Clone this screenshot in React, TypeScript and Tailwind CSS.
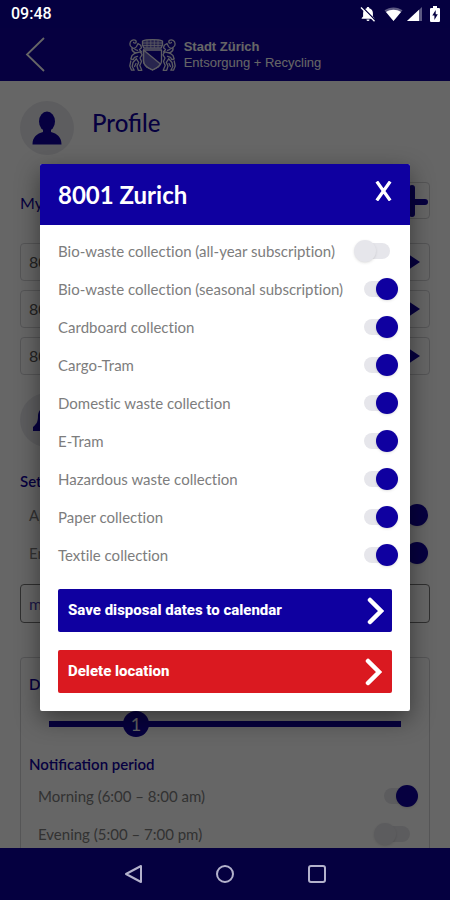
import React, { useState } from "react";

const collections = [
    { label: "Bio-waste collection (all-year subscription)", on: false },
    { label: "Bio-waste collection (seasonal subscription)", on: true },
    { label: "Cardboard collection", on: true },
    { label: "Cargo-Tram", on: true },
    { label: "Domestic waste collection", on: true },
    { label: "E-Tram", on: true },
    { label: "Hazardous waste collection", on: true },
    { label: "Paper collection", on: true },
    { label: "Textile collection", on: true },
];

export default function App() {
    return (
        <div className="relative h-screen overflow-hidden flex flex-col bg-white font-['Lato',sans-serif]">
            <StatusBar />
            <Header />
            <ProfilePage />
            <NavBar />
            <LocationDialog />
        </div>
    );
}

function StatusBar() {
    return (
        <div className="relative z-20 h-7 shrink-0 flex items-center justify-between pl-[11px] pr-[10px] bg-[#050040] text-white">
            <span className="font-['Roboto',sans-serif] font-medium text-base">09:48</span>
            <div className="flex items-center">
                {/* muted bell */}
                <svg width="16" height="16" viewBox="0 0 16 16" className="mr-2">
                    <path d="M8 1c.8 0 1.300.5 1.300 1.200C11.600 2.800 12.900 4.700 12.900 7v3.500L14.300 12v.7H1.700V12l1.400-1.500V7c0-2.300 1.300-4.200 3.600-4.800C6.700 1.500 7.200 1 8 1z" fill="currentColor" />
                    <path d="M6.500 13.600h3a1.500 1.500 0 0 1-3 0z" fill="currentColor" />
                    <path d="M2.200.9l13 13.300" stroke="#050040" strokeWidth="1.500" />
                    <path d="M1 1.500l13.500 13.700" stroke="currentColor" strokeWidth="1.300" />
                </svg>
                {/* wifi */}
                <svg width="19" height="14" viewBox="0 0 19 14" className="mr-1">
                    <path d="M9.500 14L.5 3.300C5.500-.6 13.500-.6 18.500 3.300z" fill="currentColor" opacity=".35" />
                    <path d="M9.500 14L2 5c4.500-3.100 10.500-3.100 15 0z" fill="currentColor" />
                </svg>
                {/* signal */}
                <svg width="15" height="14" viewBox="0 0 15 14" className="mr-2">
                    <path d="M0 14L15 0v14z" fill="currentColor" opacity=".35" />
                    <path d="M0 14L12 2.800V14z" fill="currentColor" />
                </svg>
                {/* battery */}
                <svg width="10" height="16" viewBox="0 0 10 16">
                    <path d="M3 0h4v2h2.200l.8.800v12.400l-.8.800H.8l-.8-.8V2.800L.8 2H3z" fill="currentColor" />
                    <path d="M5.700 4L2.300 9.600h2.100V14l3.400-5.700H5.700z" fill="#050040" />
                </svg>
            </div>
        </div>
    );
}

function Header() {
    return (
        <header className="relative h-[53px] shrink-0 flex items-center justify-center bg-[#0f00a0] text-white">
            <button aria-label="Back" className="absolute left-6 top-[9px]">
                <svg width="22" height="35" viewBox="0 0 22 35" fill="none" stroke="currentColor" strokeWidth="1.800">
                    <path d="M20 1L3 17.500 20 34" />
                </svg>
            </button>
            <div className="flex items-center gap-2">
                <CityArms />
                <div className="font-['Liberation_Sans',Arial,sans-serif] text-[13px] leading-4">
                    <div className="font-bold">Stadt Zürich</div>
                    <div>Entsorgung + Recycling</div>
                </div>
            </div>
        </header>
    );
}

// shield and mural crown between two lions
function CityArms() {
    return (
        <svg width="47" height="34" viewBox="0 0 47 34" fill="none" stroke="currentColor" strokeWidth="1.300" strokeLinejoin="round" strokeLinecap="round" className="opacity-90">
            <path d="M13.500 3c4-1.800 16-1.800 20 0v4l-1.500 3.200H15L13.500 7z" fill="currentColor" fillOpacity=".35" />
            <path d="M14 5h19M14.500 7.500h18M18 2.500v7M21.800 2v7.500M25.300 2v7.500M29 2.500v7" strokeWidth=".8" />
            <path d="M14.500 12h18v11c0 4-3 6-6 7.500l-3 1.500-3-1.500c-3-1.500-6-3.500-6-7.500z" />
            <path d="M14.500 12l17 14c-1.200 2.200-3 3.500-5 4.500l-3 1.500-3-1.500c-3-1.500-6-3.500-6-7.500z" fill="currentColor" fillOpacity=".4" />
            <Lion />
            <g transform="translate(47 0) scale(-1 1)">
                <Lion />
            </g>
        </svg>
    );
}

function Lion() {
    return (
        <g>
            <path d="M2.500 9C.3 8 .3 3.500 3 2.300c2-.9 4.500 0 4.200 1.800-.2 1.400-2.200 1.200-2.600.3" />
            <path d="M3 9.500c2 1.600 3.500.5 4.500-1L9 5.500l2.700 1.700.8 2.600-2 1.700 2 2.500M3 9.500c-.5 3 1.300 4.500 3.500 5.300L3 17.500 1.800 21l2.400.6 1.300-2.300 3-1" />
            <path d="M6.500 15l4.800-1.200 1.700 3-2 3.200 1.500 3.500-1.700 4 2 4.800H9.300L8 28l1.700-3.600-2.400-3.600M7.300 20.800L4 24.500l-.8 4 2 3.700H2.500L.8 28l1-5" />
            <path d="M6 11.500l2.500.8M7 25.500l-1.500 3" />
        </g>
    );
}

function ProfilePage() {
    return (
        <main className="flex-1 min-h-0 overflow-hidden px-5 pt-5 text-[#0f00a0]">
            <div className="flex items-center gap-[18px]">
                <div className="size-[54px] rounded-full bg-[#e9e9ee] flex items-center justify-center">
                    <svg width="30" height="34" viewBox="0 0 30 34" fill="currentColor">
                        <ellipse cx="15" cy="10.500" rx="8" ry="10" />
                        <path d="M11 17h8v4c6 1.500 10.500 5 10.500 12.500H.5C.5 26 5 22.500 11 21z" />
                    </svg>
                </div>
                <h1 className="pb-[10px] text-2xl leading-7 font-medium">Profile</h1>
            </div>

            {/* locations */}
            <div className="mt-[27px] flex items-center justify-between">
                <h2 className="pt-1 text-base">My locations</h2>
                <button aria-label="Add location" className="size-[37px] rounded-sm border border-[#d4d4d8] flex items-center justify-center">
                    <svg width="32" height="32" viewBox="0 0 32 32" stroke="currentColor" strokeWidth="6" strokeLinecap="round">
                        <path d="M16 3v26M3 17h26" />
                    </svg>
                </button>
            </div>
            <div className="mt-6 flex flex-col gap-[9px]">
                <Location name="8001 Zurich" />
                <Location name="8002 Zurich" />
                <Location name="8003 Zurich" />
            </div>

            {/* reminders */}
            <div className="mt-[18px] flex items-center gap-[18px]">
                <div className="size-[54px] rounded-full bg-[#e9e9ee] flex items-center justify-center">
                    <svg width="30" height="32" viewBox="0 0 30 32" fill="currentColor">
                        <path d="M15 1c1.700 0 3 1 3 2.700 4 1.200 6 4.300 6 8.300 0 6 1.500 8 5 11v4H1v-4c3.500-3 5-5 5-11 0-4 2-7.100 6-8.300C12 2 13.300 1 15 1zM11 28h8a4 4 0 0 1-8 0z" />
                    </svg>
                </div>
                <h1 className="pb-[10px] text-2xl leading-7 font-medium">Reminders</h1>
            </div>
            <h2 className="mt-6 mb-px text-[15px] leading-5 font-semibold">Settings</h2>
            <div className="pl-[9px] pr-[10px] pt-1">
                <ToggleRow label="App notification" on />
                <ToggleRow label="Email" on />
            </div>
            <input
                aria-label="Email address"
                defaultValue="mail@example.com"
                className="mt-3 h-[39px] w-full rounded-sm border border-[#777777] px-2 text-base text-[#4a40b0] outline-none"
            />

            {/* period card */}
            <div className="mt-[34px] rounded-sm border border-[#d4d4d8] px-2 pt-4 pb-6">
                <h3 className="text-[15px] leading-5 font-semibold">Days in advance</h3>
                <div className="relative mx-5 mt-[17px] h-[26px] flex items-center">
                    <input type="range" aria-label="Days in advance" min={0} max={4} defaultValue={1} className="h-[6px] w-full appearance-none bg-[#0f00a0] [&::-webkit-slider-thumb]:appearance-none" />
                    <span className="pointer-events-none absolute left-[74px] size-[26px] rounded-full bg-[#0f00a0] text-white text-lg leading-[26px] text-center">1</span>
                </div>
                <h3 className="mt-[17px] text-[15px] leading-5 font-semibold">Notification period</h3>
                <div className="pl-[9px] pr-[11px] pt-[3px]">
                    <ToggleRow label="Morning (6:00 – 8:00 am)" on />
                    <ToggleRow label="Evening (5:00 – 7:00 pm)" on={false} />
                </div>
            </div>
        </main>
    );
}

function Location({ name }: { name: string }) {
    return (
        <button className="h-[38px] rounded-sm border border-[#d4d4d8] pl-2 pr-[9px] flex items-center justify-between text-base text-[#555555]">
            {name}
            <svg width="12" height="16" viewBox="0 0 12 16" className="text-[#0f00a0]" fill="currentColor">
                <path d="M0 0l12 8-12 8z" />
            </svg>
        </button>
    );
}

function ToggleRow({ label, on }: { label: string; on: boolean }) {
    const [checked, setChecked] = useState(on);

    return (
        <label className="h-[38px] flex items-center justify-between text-[15px] text-[#7d7d7d] [font-variant-ligatures:none]">
            {label}
            <input
                type="checkbox"
                checked={checked}
                onChange={(e) => setChecked(e.target.checked)}
                className="relative h-4 w-[26px] shrink-0 appearance-none rounded-full bg-[#e6e6eb] before:absolute before:-top-[3px]
                before:-left-[10px] before:size-[22px] before:rounded-full before:bg-[#e6e6eb] before:shadow-sm
                checked:before:left-3 checked:before:bg-[#0f00a0]"
            />
        </label>
    );
}

function NavBar() {
    return (
        <nav className="relative z-20 h-[52px] shrink-0 flex items-center justify-center gap-[72px] bg-[#050040] text-[#b4b2cc]">
            <button aria-label="Back">
                <svg width="20" height="20" viewBox="0 0 20 20" fill="none" stroke="currentColor" strokeWidth="2" strokeLinejoin="round">
                    <path d="M18 2v16L3 10z" />
                </svg>
            </button>
            <button aria-label="Home">
                <svg width="20" height="20" viewBox="0 0 20 20" fill="none" stroke="currentColor" strokeWidth="2">
                    <circle cx="10" cy="10" r="8" />
                </svg>
            </button>
            <button aria-label="Recent apps">
                <svg width="20" height="20" viewBox="0 0 20 20" fill="none" stroke="currentColor" strokeWidth="2">
                    <rect x="2" y="2" width="16" height="16" rx="2" />
                </svg>
            </button>
        </nav>
    );
}

function LocationDialog() {
    return (
        <div className="absolute inset-0 z-10 flex items-center px-10 pt-7 pb-[53px] bg-black/60">
            <div role="dialog" aria-label="8001 Zurich" className="w-full rounded-xs overflow-hidden bg-white shadow-[0_8px_24px_rgba(0,0,0,0.45)]">
                {/* header */}
                <div className="h-[61px] flex items-center justify-between px-[18px] bg-[#0f00a0] text-white">
                    <h2 className="text-2xl font-bold">8001 Zurich</h2>
                    <button aria-label="Close" className="pb-2">
                        <svg width="17" height="20" viewBox="0 0 17 20" fill="none" stroke="currentColor" strokeWidth="3.200">
                            <path d="M1.800.5l13.400 19M15.200.5l-13.400 19" />
                        </svg>
                    </button>
                </div>

                {/* collections */}
                <div className="pl-[18px] pr-5 pt-[7px]">
                    {collections.map((item) => (
                        <ToggleRow key={item.label} label={item.label} on={item.on} />
                    ))}
                </div>

                {/* actions */}
                <div className="px-[18px] pt-[15px] pb-[18px] flex flex-col gap-[18px]">
                    <button className="h-[43px] rounded-xs pl-[10px] pr-2 flex items-center justify-between bg-[#0f00a0] text-white text-[15px] font-extrabold font-['Roboto',sans-serif]">
                        Save disposal dates to calendar
                        <Chevron />
                    </button>
                    <button className="h-[43px] rounded-xs pl-[10px] pr-[10px] flex items-center justify-between bg-[#da1920] text-white text-[15px] font-extrabold font-['Roboto',sans-serif]">
                        Delete location
                        <Chevron />
                    </button>
                </div>
            </div>
        </div>
    );
}

function Chevron() {
    return (
        <svg width="17" height="28" viewBox="0 0 17 28" fill="none" stroke="currentColor" strokeWidth="4.500" strokeLinecap="round">
            <path d="M3 3l11 11L3 25" />
        </svg>
    );
}
